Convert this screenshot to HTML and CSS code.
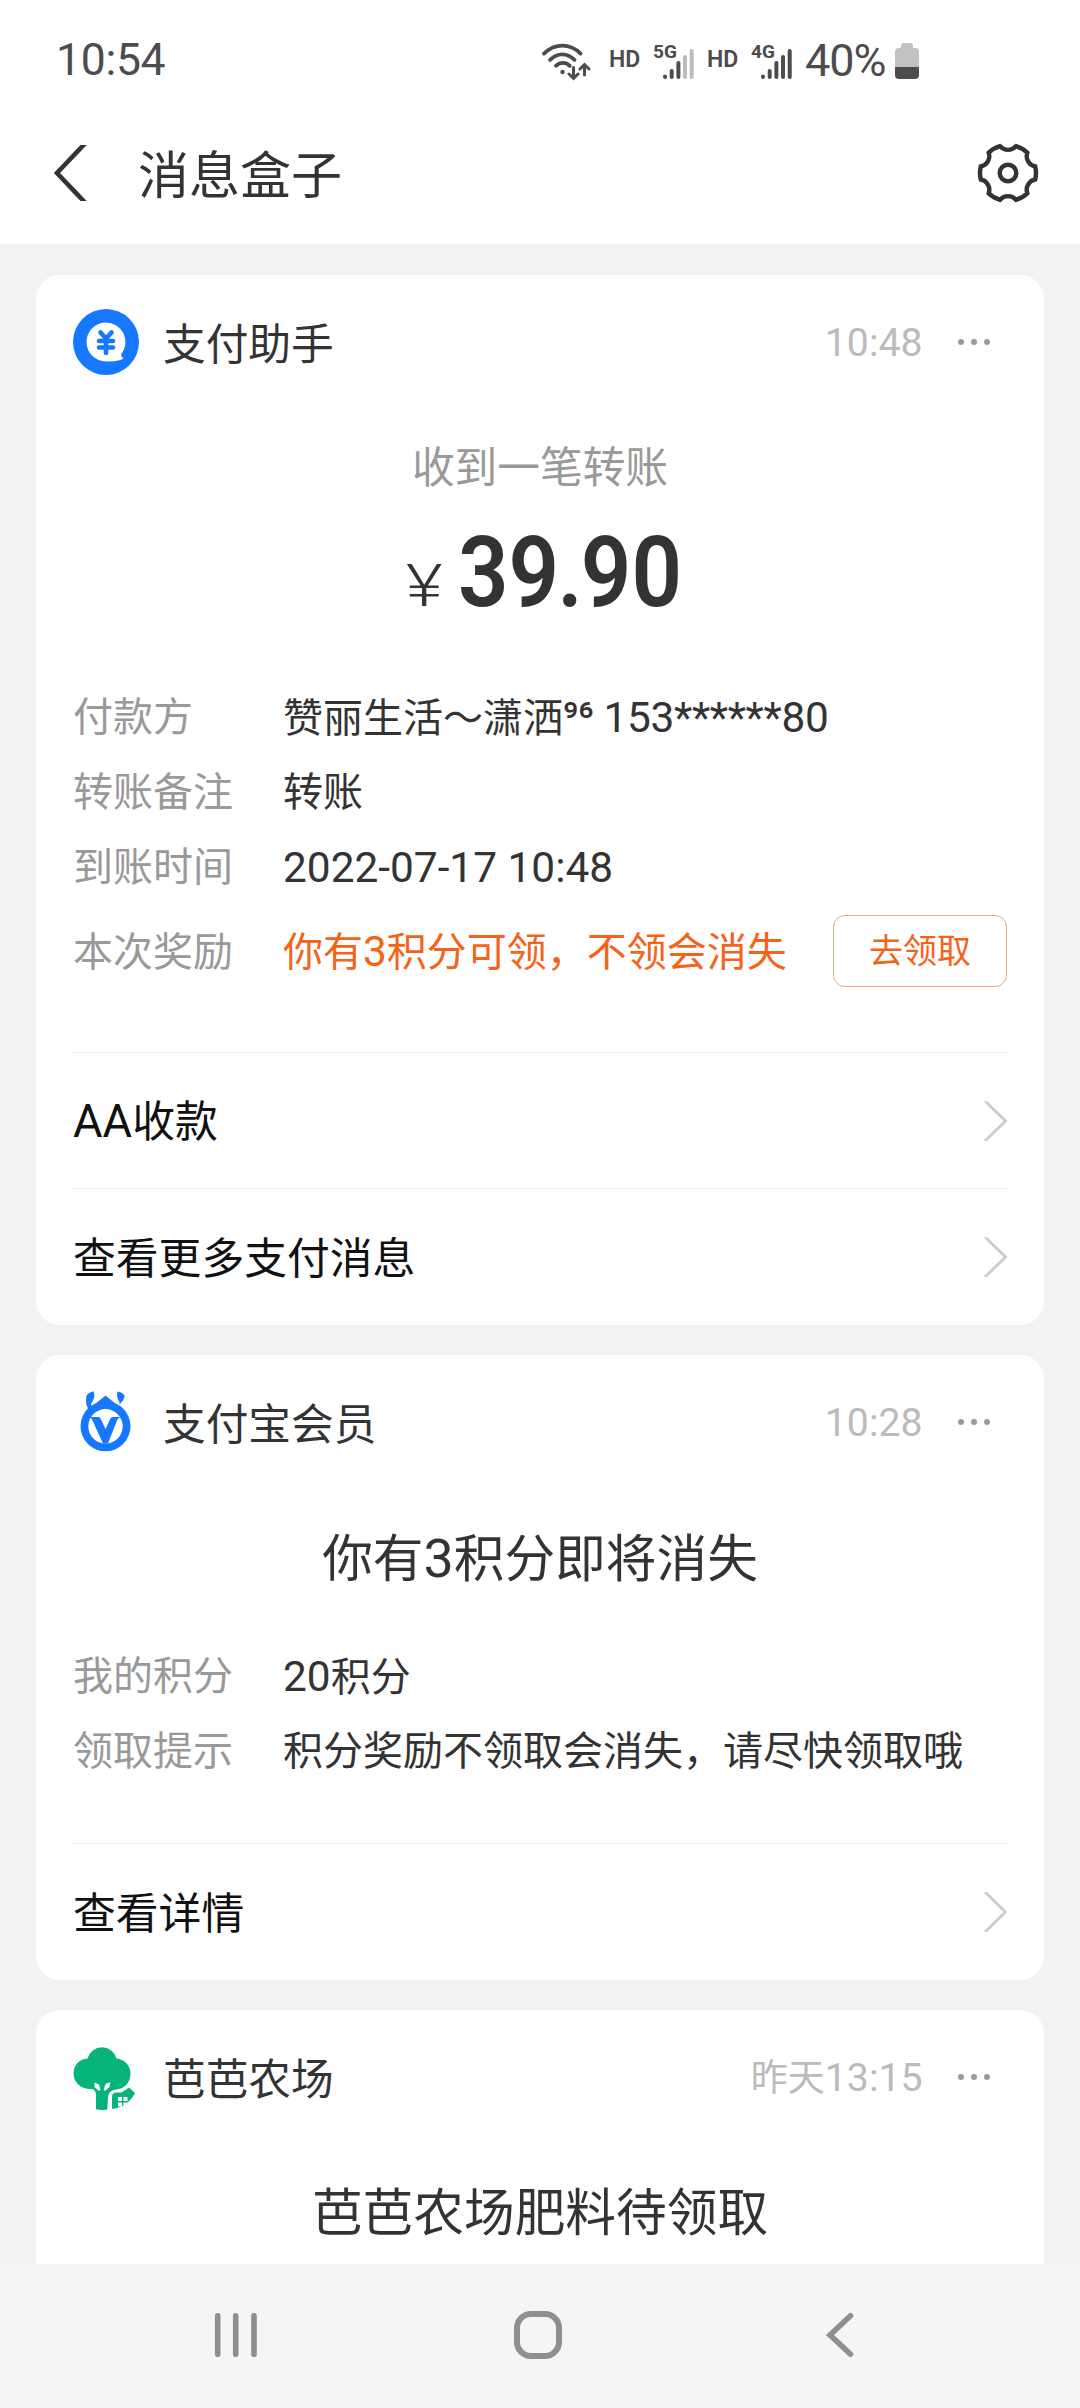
FILE: index.html
```html
<!DOCTYPE html>
<html lang="zh-CN">
<head>
<meta charset="utf-8">
<title>消息盒子</title>
<link rel="stylesheet" href="styles.css">
</head>
<body>
<header class="top">
  <div class="status">
    <span class="clock">10:54</span>
    <div class="indicators">
      <svg class="wifi" width="50" height="40" viewBox="0 0 50 40" fill="none" stroke="#4c4c4c" stroke-width="3.8" stroke-linecap="round">
        <path d="M3 12.6C14 2 29 2 39.500 12.600M9 18.800C16.500 11.500 26 11.500 33.500 18.800M15 24.800C19 21 25 21 28.800 24.800"/>
        <circle cx="21.500" cy="31" r="2.200" fill="#4c4c4c" stroke="none"/>
        <path stroke-width="3" d="M32.500 26.500V37M28 33l4.500 4.500L37 33M43.500 34V24M39 28l4.500-4.500L48 28"/>
      </svg>
      <span class="hd">HD</span>
      <svg class="signal" width="42" height="40" viewBox="0 0 42 40" stroke="#4c4c4c" stroke-width="4" stroke-linecap="round">
        <text class="gen" x="0" y="17">5G</text>
        <path d="M12 36v-.5M18.700 36v-6M25.400 36V22"/><path stroke="#bbb" d="M32 36V16M38.700 36V10"/>
      </svg>
      <span class="hd">HD</span>
      <svg class="signal" width="42" height="40" viewBox="0 0 42 40" stroke="#4c4c4c" stroke-width="4" stroke-linecap="round">
        <text class="gen" x="0" y="17">4G</text>
        <path d="M12 36v-.5M18.700 36v-6M25.400 36V22M32 36V16M38.700 36V10"/>
      </svg>
      <span class="percent">40%</span>
      <svg class="battery" width="24" height="36" viewBox="0 0 24 36">
        <path fill="#c1c1c1" d="M6 5V3a3 3 0 0 1 3-3h6a3 3 0 0 1 3 3v2h2a4 4 0 0 1 4 4v15H0V9a4 4 0 0 1 4-4z"/>
        <path fill="#4c4c4c" d="M0 24h24v8a4 4 0 0 1-4 4H4a4 4 0 0 1-4-4z"/>
      </svg>
    </div>
  </div>
  <div class="titlebar">
    <svg class="back" width="36" height="56" viewBox="0 0 36 56" fill="none" stroke="#333" stroke-width="4.600"><path d="M32.500-2L4 28l28.500 30"/></svg>
    <h1>消息盒子</h1>
    <svg class="gear" width="64" height="64" viewBox="-32 -32 64 64" fill="none" stroke="#333" stroke-width="4.400">
      <path d="M27.200-6.500A28 28 0 0 1 27.200 6.500A10.500 10.500 0 0 0 19.300 20.300A28 28 0 0 1 8 26.800A10.500 10.500 0 0 0-8 26.800A28 28 0 0 1-19.300 20.300A10.500 10.500 0 0 0-27.200 6.500A28 28 0 0 1-27.200-6.500A10.500 10.500 0 0 0-19.300-20.300A28 28 0 0 1-8-26.800A10.500 10.500 0 0 0 8-26.800A28 28 0 0 1 19.300-20.300A10.500 10.500 0 0 0 27.200-6.500z"/>
      <circle r="8.300"/>
    </svg>
  </div>
</header>

<main class="feed">
  <section class="card">
    <div class="head">
      <svg class="logo" width="66" height="66" viewBox="0 0 66 66">
        <circle cx="33" cy="33" r="33" fill="#1677ff"/>
        <path fill="#fff" d="M33 13.500a19.500 19.500 0 0 1 15.600 31.200c-.8 1.300-.6 2.700 1.900 4.600-4 3-12 3.300-17.500 3.200A19.500 19.500 0 0 1 33 13.500z"/>
        <path fill="none" stroke="#1677ff" stroke-width="4.600" stroke-linecap="round" stroke-linejoin="round" d="M27.500 23.500L33 29.500l5.500-6M33 29.500v14.500M26 32h14M26 38.500h14"/>
      </svg>
      <h2>支付助手</h2>
      <time><span class="num">10:48</span></time>
      <span class="more"><i></i><i></i><i></i></span>
    </div>
    <p class="subtitle">收到一笔转账</p>
    <p class="amount"><span class="yen">¥</span><span class="value">39<span class="point">.</span>90</span></p>
    <dl class="rows">
      <div><dt>付款方</dt><dd>赞丽生活～潇洒<span class="num account">⁹⁶ 153******80</span></dd></div>
      <div><dt>转账备注</dt><dd>转账</dd></div>
      <div><dt>到账时间</dt><dd><span class="num">2022-07-17 10:48</span></dd></div>
      <div class="reward"><dt>本次奖励</dt><dd>你有<span class="num">3</span>积分可领，不领会消失</dd><button>去领取</button></div>
    </dl>
    <a class="action">
      <span><span class="num">AA</span>收款</span>
      <svg width="23" height="40" viewBox="0 0 23 40" fill="none" stroke="#ccc" stroke-width="2.800"><path d="M1 0l20.500 20L1 40"/></svg>
    </a>
    <a class="action last">
      <span>查看更多支付消息</span>
      <svg width="23" height="40" viewBox="0 0 23 40" fill="none" stroke="#ccc" stroke-width="2.800"><path d="M1 0l20.500 20L1 40"/></svg>
    </a>
  </section>

  <section class="card">
    <div class="head">
      <svg class="logo" width="66" height="66" viewBox="0 0 66 66" fill="#1677ff">
        <path d="M16 20L32.500 6.500 49 20z"/>
        <circle cx="32.500" cy="37.300" r="25"/>
        <circle cx="32.500" cy="37.300" r="17.200" fill="#fff"/>
        <path d="M16.500 28H25c1.200 0 2 .5 2.500 1.500l5 10.500 5-10.500c.5-1 1.300-1.500 2.500-1.500h8.500c-2 0-3.300 1.500-4.500 3.500L35 54.500h-5L19.500 31.500c-.8-1.800-1.500-3-3-3.500z"/>
        <path d="M20.800 2.500c1.500 5-.3 9-3 12.500.3 1.500 1.500 3 2.500 4l-3.500 2.500c-3.500-3.500-4.500-9-3.200-15 1.600-2.500 4.200-3.800 7.200-4z"/>
        <path d="M44.500 2.500c3 .3 5.500 1.600 7.200 4-.6 4-2.700 6.500-5.700 9.500 1-2 .5-3-.5-4.500-1.500-2.500-1.700-6-1-9z"/>
      </svg>
      <h2>支付宝会员</h2>
      <time><span class="num">10:28</span></time>
      <span class="more"><i></i><i></i><i></i></span>
    </div>
    <p class="headline">你有<span class="num">3</span>积分即将消失</p>
    <dl class="rows">
      <div><dt>我的积分</dt><dd><span class="num">20</span>积分</dd></div>
      <div><dt>领取提示</dt><dd>积分奖励不领取会消失，请尽快领取哦</dd></div>
    </dl>
    <a class="action last">
      <span>查看详情</span>
      <svg width="23" height="40" viewBox="0 0 23 40" fill="none" stroke="#ccc" stroke-width="2.800"><path d="M1 0l20.500 20L1 40"/></svg>
    </a>
  </section>

  <section class="card">
    <div class="head">
      <svg class="logo" width="66" height="66" viewBox="0 0 66 66" fill="#06b37b">
        <path d="M14.500 14.500a15 15 0 0 1 29 0C51 15 57.500 21.500 57.500 29.500 57.500 39 51 45 43 45.500c-4.500.5-7.500 3-8 7.500l-.7 12.600c-4 .6-8 .4-11.300-.4V51c0-3-1.500-6-4.500-6C8 45.500.5 38.500.5 29.500.5 21 6.500 15 14.500 14.500z"/>
        <path fill="#fff" d="M21.500 38.500l4.500 2 1.500 5.500-1.500 1-4.500-4zM37.500 38l-5 2-1.800 5.500 1.300 1.500 4.500-4z"/>
        <path d="M39 65V53c0-3 1.300-4.600 4.500-4.600h5L56 43.500l6 5.500C57.500 58 50 63.500 39 65z"/>
        <path fill="#fff" d="M45 53h4v4h-4zM50.500 53h4v4h-4zM45 58.500h4v4h-4zM50.500 58.500h4l-4 3.500z"/>
      </svg>
      <h2>芭芭农场</h2>
      <time>昨天<span class="num">13:15</span></time>
      <span class="more"><i></i><i></i><i></i></span>
    </div>
    <p class="headline">芭芭农场肥料待领取</p>
  </section>
</main>

<nav class="keys">
  <svg width="44" height="52" viewBox="0 0 44 52" stroke="#8f8f8f" stroke-width="5.600" stroke-linecap="round"><path d="M3.700 6.800v38.400M21.700 6.800v38.400M40 6.800v38.400"/></svg>
  <svg class="home" width="52" height="52" viewBox="0 0 52 52" fill="none" stroke="#8f8f8f" stroke-width="6"><rect x="5" y="5" width="42" height="42" rx="14"/></svg>
  <svg width="32" height="52" viewBox="0 0 32 52" fill="none" stroke="#8f8f8f" stroke-width="5.600" stroke-linecap="round"><path d="M26.500 6.800L6 26l20.500 19.200"/></svg>
</nav>
</body>
</html>
```
FILE: styles.css
```css
* { box-sizing: border-box; margin: 0; padding: 0; }

body {
  display: flex;
  flex-direction: column;
  width: 1080px;
  height: 2408px;
  overflow: hidden;
  background: #f2f2f2;
  color: #333;
  font-family: Roboto, "Noto Sans CJK SC", sans-serif;
}

svg { display: block; flex: none; }
h1, h2 { font-weight: 400; }

/* Latin text and digits run slightly larger than the CJK text around them */
.num { font-size: 1.06em; }
.account { letter-spacing: -.35px; }

.top {
  flex: none;
  height: 244px;
  background: #fff;
}

.status {
  display: flex;
  justify-content: space-between;
  height: 102px;
  padding: 0 161px 0 56px;
  color: #4c4c4c;
}
.clock { font-size: 44.500px; line-height: 121px; letter-spacing: -.3px; }
.percent { width: 90px; font-size: 45px; line-height: 121px; letter-spacing: -1px; }
.indicators { display: flex; align-items: flex-start; }
.wifi { margin: 41px 18px 0 0; }
.hd { width: 44px; font-size: 23px; font-weight: 600; line-height: 120px; }
.signal { margin: 41px 12px 0 0; }
.gen { fill: #4c4c4c; stroke: none; font-size: 19px; font-weight: 700; }
.battery { margin-top: 43px; }

.titlebar {
  display: flex;
  align-items: center;
  height: 142px;
  padding: 0 40px 0 53px;
}
.back { width: 36px; }
.titlebar h1 { flex: 1; margin: 8px 0 0 49px; font-size: 51px; line-height: 60px; }

.feed {
  display: flex;
  flex: 1;
  flex-direction: column;
  gap: 30px;
  min-height: 0;
  padding: 31px 36px 0;
  overflow: hidden;
}
.card {
  flex: none;
  padding: 0 37px;
  border-radius: 24px;
  background: #fff;
}
.card:last-child { height: 400px; }

.head { display: flex; align-items: center; height: 134px; }
.head h2 { flex: 1; margin-left: 24px; font-size: 42.700px; line-height: 60px; padding-top: 5px; }
.head time { font-size: 37px; line-height: 60px; color: #bbb; padding-top: 3px; }
.more { display: flex; gap: 6.500px; margin: 0 17px 0 35px; }
.more i { width: 6.500px; height: 6.500px; border-radius: 50%; background: #999; }

.subtitle {
  height: 116px;
  font-size: 42.700px;
  line-height: 119px;
  color: #999;
  text-align: center;
}
.amount { display: flex; height: 92px; padding-left: 333px; }
.yen {
  width: 52px;
  font-size: 60px;
  font-weight: 300;
  line-height: 122px;
  transform: scaleX(1.18);
  transform-origin: left;
}
.value {
  font-size: 99px;
  font-weight: 600;
  line-height: 95px;
  transform: scaleX(.895);
  transform-origin: left;
}
.point { margin: 0 -2px; }

.rows { padding: 62px 0 54px; font-size: 40px; }
.rows div { display: flex; align-items: center; height: 75px; line-height: 75px; }
.rows dt { width: 210px; padding-top: 2px; color: #999; }
.rows dd { flex: 1; padding-top: 2px; white-space: nowrap; }
.rows .reward { height: 94px; }
.reward dd { color: #f5631a; }
.reward button {
  width: 174px;
  height: 72px;
  border: 1px solid #eba98a;
  border-radius: 12px;
  background: none;
  color: #f5631a;
  font: 34px/70px Roboto, "Noto Sans CJK SC", sans-serif;
}

.action {
  display: flex;
  align-items: center;
  justify-content: space-between;
  height: 136px;
  border-top: 1px solid #eee;
  font-size: 42.800px;
  line-height: 60px;
  color: #111;
}
.action.last { height: 137px; }
.action span { padding-top: 3px; }
.action .num { padding: 0; }

.headline {
  height: 140px;
  font-size: 50.700px;
  line-height: 140px;
  text-align: center;
}
.headline + .rows { padding: 9px 0 55px; }

.keys {
  display: flex;
  align-items: center;
  justify-content: space-between;
  flex: none;
  height: 144px;
  padding: 0 224px 2px 214px;
  background: #f5f5f5;
}
.home { margin-right: 6px; }
```
